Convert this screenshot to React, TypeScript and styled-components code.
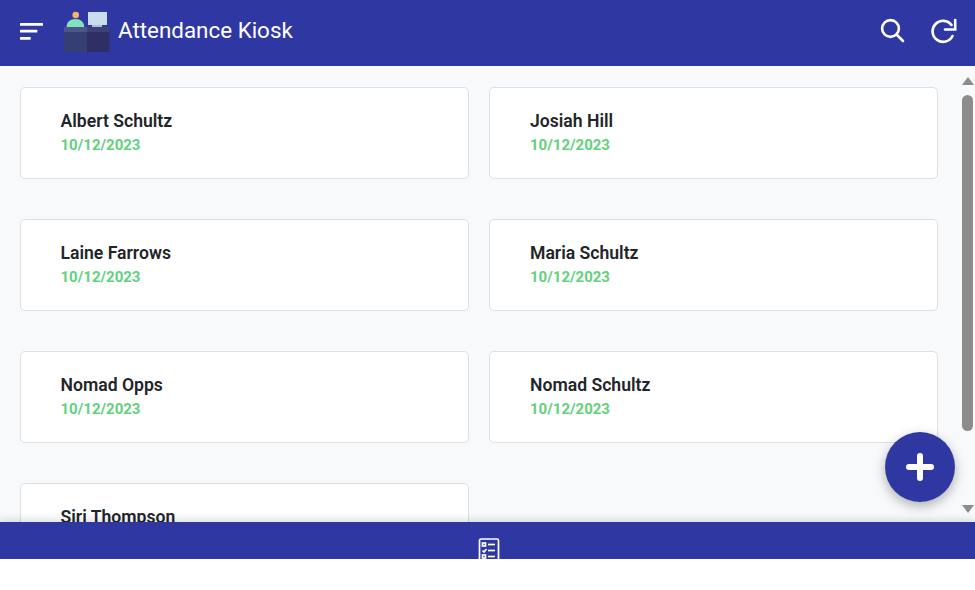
import { createGlobalStyle } from "styled-components";
import styled from "styled-components";

const people = [
  "Albert Schultz",
  "Josiah Hill",
  "Laine Farrows",
  "Maria Schultz",
  "Nomad Opps",
  "Nomad Schultz",
  "Siri Thompson",
];

function App() {
  return (
    <>
      <GlobalStyle />
      <Page>
        <Header>
          <HeaderLeft>
            <MenuIcon width="24" height="17" viewBox="0 0 24 17">
              <rect x="0" y="0" width="23" height="2.7" rx="0.5" fill="#fff" />
              <rect x="0" y="6.8" width="17.3" height="2.7" rx="0.5" fill="#fff" />
              <rect x="0" y="14" width="10.7" height="2.7" rx="0.5" fill="#fff" />
            </MenuIcon>
            <Logo width="46" height="41" viewBox="0 0 46 41">
              <rect x="24" y="1" width="19" height="13" fill="#c9dcf0" />
              <rect x="28" y="14" width="10" height="3" fill="#a9bfdc" />
              <circle cx="11.7" cy="4" r="3.3" fill="#f5b56b" />
              <path d="M2.5 16c0-5 3.7-8 9-8s8.7 3 8.7 8z" fill="#7fe3bd" />
              <rect x="0" y="16" width="23" height="25" fill="#353f74" />
              <rect x="23" y="16" width="22.5" height="25" fill="#2f2f66" />
              <rect x="0" y="16" width="23" height="5" fill="#4d5589" />
              <rect x="23" y="16" width="22.5" height="5" fill="#3c4178" />
            </Logo>
            <Title>Attendance Kiosk</Title>
          </HeaderLeft>
          <HeaderRight>
            <HeaderIcon width="26" height="26" viewBox="0 0 26 26">
              <circle cx="10.5" cy="10.5" r="8.4" />
              <line x1="16.5" y1="16.5" x2="23" y2="23" />
            </HeaderIcon>
            <HeaderIcon width="26" height="26" viewBox="0 0 26 26">
              <path d="M20.5 7A10.5 10.5 0 1 0 21.5 18" />
              <path d="M24.2 2v9.5H14" />
            </HeaderIcon>
          </HeaderRight>
        </Header>

        <Main>
          <CardGrid>
            {people.map((name) => (
              <Card key={name}>
                <Name>{name}</Name>
                <DateText>10/12/2023</DateText>
              </Card>
            ))}
          </CardGrid>
          <Scrollbar>
            <ArrowUp />
            <Thumb />
            <ArrowDown />
          </Scrollbar>
          <Fab>
            <svg width="28" height="28" viewBox="0 0 28 28">
              <path
                d="M14 3v22M3 14h22"
                stroke="#fff"
                strokeWidth="6"
                strokeLinecap="round"
              />
            </svg>
          </Fab>
        </Main>

        <BottomBar>
          <ListIcon width="22" height="28" viewBox="0 0 22 28">
            <rect x="1.5" y="1" width="19" height="26" rx="1.5" />
            <rect x="4.5" y="5" width="3" height="3" />
            <line x1="10" y1="6.5" x2="17" y2="6.5" />
            <path d="M4.5 12.5l1.5 1.5 2.5-3" />
            <line x1="10" y1="12.5" x2="17" y2="12.5" />
            <rect x="4.5" y="17" width="3" height="3" />
            <line x1="10" y1="18.5" x2="17" y2="18.5" />
          </ListIcon>
        </BottomBar>
      </Page>
    </>
  );
}

export default App;

const GlobalStyle = createGlobalStyle`
  html, body {
    margin: 0;
    padding: 0;
    background: #fff;
    font-family: Roboto, "Liberation Sans", sans-serif;
  }
`;

const Page = styled.div`
  height: 559px;
  display: flex;
  flex-direction: column;
  overflow: hidden;
`;

const Header = styled.header`
  box-sizing: border-box;
  height: 66px;
  flex: none;
  background: #2f38a2;
  display: flex;
  align-items: center;
  justify-content: space-between;
  padding: 0 20px 4px;
`;

const HeaderLeft = styled.div`
  display: flex;
  align-items: center;
`;

const MenuIcon = styled.svg`
  margin-top: 1px;
`;

const Logo = styled.svg`
  margin-left: 20px;
  margin-top: 1px;
`;

const Title = styled.h1`
  margin: 0 0 2px 8px;
  color: #fff;
  font-size: 22.4px;
  font-weight: 400;
`;

const HeaderRight = styled.div`
  display: flex;
  align-items: center;
  gap: 25px;
  margin-right: -2px;
`;

const HeaderIcon = styled.svg`
  fill: none;
  stroke: #fff;
  stroke-width: 2.6;
  stroke-linecap: round;
`;

const Main = styled.main`
  position: relative;
  flex: 1;
  min-height: 0;
  background: #f8f9fa;
  display: flex;
  overflow: hidden;
`;

const CardGrid = styled.div`
  flex: 1;
  display: grid;
  grid-template-columns: 449px 449px;
  grid-auto-rows: 92px;
  gap: 40px 20px;
  padding: 21px 0 0 20px;
`;

const Card = styled.div`
  box-sizing: border-box;
  background: #fff;
  border: 1px solid #dcdfe3;
  border-radius: 5px;
  padding: 21px 40px;

  &:nth-child(odd) {
    padding-left: 39.5px;
  }
`;

const Name = styled.div`
  color: #212529;
  font-size: 17.6px;
  font-weight: 600;
  line-height: 24px;
`;

const DateText = styled.div`
  color: #62d17c;
  font-size: 15px;
  font-weight: 700;
  line-height: 24px;
`;

const Scrollbar = styled.div`
  flex: none;
  width: 15px;
  display: flex;
  flex-direction: column;
  align-items: center;
  padding-top: 11px;
`;

const ArrowUp = styled.div`
  width: 0;
  height: 0;
  border-left: 6px solid transparent;
  border-right: 6px solid transparent;
  border-bottom: 8px solid #8c8c8c;
`;

const Thumb = styled.div`
  width: 11px;
  height: 336px;
  margin-top: 10px;
  background: #8c8c8c;
  border-radius: 6px;
`;

const ArrowDown = styled.div`
  width: 0;
  height: 0;
  margin-top: 74px;
  border-left: 6px solid transparent;
  border-right: 6px solid transparent;
  border-top: 8px solid #8c8c8c;
`;

const Fab = styled.button`
  position: absolute;
  left: 885px;
  top: 366px;
  width: 70px;
  height: 70px;
  padding: 0;
  border: none;
  border-radius: 50%;
  background: #2f38a2;
  box-shadow: 0 4px 12px rgba(0, 0, 0, 0.3);
  display: flex;
  align-items: center;
  justify-content: center;
`;

const BottomBar = styled.nav`
  position: relative;
  height: 37px;
  flex: none;
  background: #2f38a2;
  box-shadow: 0 -2px 8px rgba(0, 0, 0, 0.15);
  display: flex;
  justify-content: center;
  align-items: flex-start;
  padding-top: 16px;
  box-sizing: border-box;
  overflow: hidden;
`;

const ListIcon = styled.svg`
  fill: none;
  stroke: #fff;
  stroke-width: 1.7;
  flex: none;
  margin-left: 3px;
`;
